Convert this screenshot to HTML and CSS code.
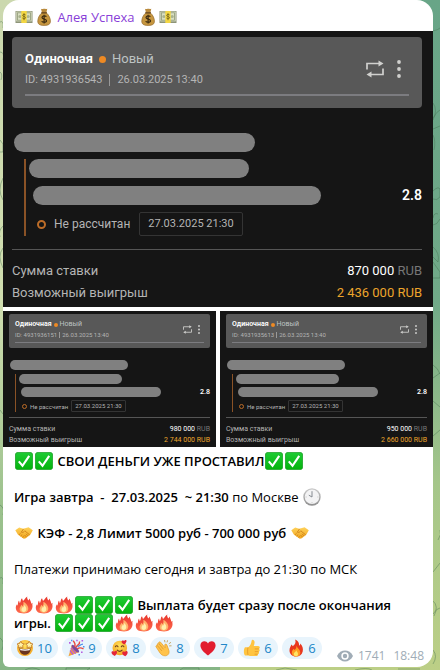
FILE: index.html
```html
<!DOCTYPE html>
<html lang="ru">
<head>
  <meta charset="UTF-8" />
  <meta name="viewport" content="width=device-width, initial-scale=1.0" />
  <title>Алея Успеха</title>
  <link rel="stylesheet" href="styles.css">
</head>

<body>
  <!-- icons -->
  <svg class="sprite" aria-hidden="true">
    <defs>
      <linearGradient id="g-check" x1="0" y1="0" x2="0" y2="1"><stop offset="0" stop-color="#1fcb35"/><stop offset="1" stop-color="#04b30c"/></linearGradient>
      <linearGradient id="g-fire" x1="0" y1="0" x2="0" y2="1"><stop offset="0" stop-color="#e8362c"/><stop offset="1" stop-color="#ff6a4c"/></linearGradient>
      <linearGradient id="g-hand" x1="0" y1="0" x2="0" y2="1"><stop offset="0" stop-color="#ffd25a"/><stop offset="1" stop-color="#f0a41c"/></linearGradient>
      <radialGradient id="g-face" cx=".5" cy=".35" r=".65"><stop offset="0" stop-color="#ffe25c"/><stop offset="1" stop-color="#f5a623"/></radialGradient>
      <linearGradient id="g-clock" x1="0" y1="0" x2="0" y2="1"><stop offset="0" stop-color="#c9c9c9"/><stop offset="1" stop-color="#8f8f8f"/></linearGradient>
    </defs>
    <symbol id="money" viewBox="0 0 18 18">
      <rect x=".5" y="3" width="17" height="12" fill="#8d9478"/>
      <rect x="1.3" y="3.6" width="15.4" height="9.8" fill="#d9dfc2"/>
      <rect x="2.5" y="4.8" width="13" height="7.4" fill="none" stroke="#909a78" stroke-width=".8"/>
      <circle cx="4.8" cy="8.5" r="1.5" fill="#a9b28e"/><circle cx="13.2" cy="8.5" r="1.5" fill="#a9b28e"/>
      <rect x="6.3" y="3" width="5.4" height="12" fill="#f4d743"/>
      <path d="M10.6 7c-.4-.7-3-.9-3 .4 0 1.4 3 .8 3 2.3 0 1.4-2.8 1.2-3.2.2M9 5.2v7" fill="none" stroke="#7c6a1a" stroke-width=".9"/>
    </symbol>
    <symbol id="bag" viewBox="0 0 18 18">
      <path d="M6 .8c1.4.8 2-.5 3.3 0 1.2-.5 2 .5 3 0L11.4 4.5H6.9z" fill="#b98a3d"/>
      <path d="M6.8 5h4.6c2.6 2 4 5.500 4 8.200 0 2.800-1.600 4.200-6.300 4.200s-6.300-1.400-6.300-4.200c0-2.700 1.400-6.200 4-8.200z" fill="#c6963f" stroke="#93682a" stroke-width=".7"/>
      <path d="M6.3 4.8h5.6" stroke="#6d4a1d" stroke-width="1.4"/>
      <path d="M11.3 8.8c-.5-1.200-4.300-1.300-4.300.7 0 2.200 4.500 1.100 4.500 3.300 0 2-4.200 1.800-4.800.3M9.1 6.8v8.6" fill="none" stroke="#3b2a10" stroke-width="1.2"/>
    </symbol>
    <symbol id="check" viewBox="0 0 18 18">
      <rect x=".4" y=".4" width="17.2" height="17.2" rx="2.5" fill="url(#g-check)" stroke="#189e22" stroke-width=".8"/>
      <path d="M3.8 9.4l3.7 4.4 6.7-10" fill="none" stroke="#fff" stroke-width="2.1"/>
    </symbol>
    <symbol id="handshake" viewBox="0 0 18 18">
      <path d="M.3 6.2L4.2 3.500 8.3 4.7 13.6 3.3 17.8 6.2 15.4 10.5 10.8 14.2 8.8 14.8 3 10.7z" fill="url(#g-hand)"/>
      <path d="M8.5 4.9L6.3 8.2c1.6.8 2.8-.4 3.5-1.400l5 4.200M4 10.8l1.6-1.5M5.6 12.1l1.6-1.5M7.4 13.4l1.4-1.4M11 9.8l2.3 2.3M9.5 11l2 2" fill="none" stroke="#c87a14" stroke-width=".8"/>
    </symbol>
    <symbol id="clock" viewBox="0 0 18 18">
      <circle cx="9" cy="9" r="8.7" fill="url(#g-clock)"/>
      <circle cx="9" cy="8.8" r="7.3" fill="#f3f3f4"/>
      <path d="M9 3.2V9L5.8 7.2" fill="none" stroke="#858a91" stroke-width="1"/>
      <path d="M9 15.2v-1M15.4 9h-1M2.6 9h1" stroke="#b8b8b8" stroke-width=".8"/>
    </symbol>
    <symbol id="blaze" viewBox="0 0 18 18">
      <path d="M2.600 16C.3 13.800.2 10.500 2 8.300l.3 1.500C3.400 8.300 2.600 6 4 4.600l.8 2.600C6 5.800 5.400 3.600 7 2.300l1 2.600C9.700 4 9.700 2.200 12.300.6c-.6 1.600.3 2.700 1 3.800l1.600-1.900c-.3 1.900 1.500 3.300 1.300 5.200l1.300-1c-.5 2 .5 3.200-.2 5.300C16.500 15 14.200 17.400 9 17.400c-2.700 0-4.900-.3-6.400-1.400z" fill="url(#g-fire)"/>
      <path d="M8.300 5.800c2.500 1.400 5.300 4.200 5 7.300-.3 2.400-2 3.700-4.400 3.700-2.500 0-4.400-1.600-4.300-4 .1-1.700 1.400-2.400 1.800-4l1.100 1.400c1-1.100 1.300-2.600.8-4.400z" fill="#ffb36b"/>
      <path d="M9 9c1.500 1.300 2.500 2.700 2.300 4.400-.2 1.600-1.200 2.500-2.500 2.500s-2.500-1-2.300-2.700c.2-1.200 1-1.600 1.300-2.500l.7.700c.4-.7.6-1.500.5-2.400z" fill="#fff0ac"/>
    </symbol>
    <symbol id="starstruck" viewBox="0 0 18 18">
      <circle cx="9" cy="9" r="8" fill="url(#g-face)"/>
      <path d="M3.400 9.200c3.300.9 7.900.9 11.200 0 .2 4-2.200 6.500-5.600 6.500s-5.800-2.500-5.600-6.500z" fill="#69331f"/>
      <path d="M4 9.800c3 .8 7 .8 10 0l-.4 1.500c-2.800.6-6.400.6-9.200 0z" fill="#fff"/>
      <path d="M4.800 2.300l1.100 2 2.400.5-1.600 1.800.2 2.400-2.100-1-2.300 1 .3-2.400L1 4.900l2.600-.5zM13.200 2.300l-1.100 2-2.400.5 1.600 1.800-.2 2.400 2.100-1 2.300 1-.3-2.400L17 4.900l-2.600-.5z" fill="#fff2a8" stroke="#b76a20" stroke-width=".7"/>
    </symbol>
    <symbol id="party" viewBox="0 0 18 18">
      <path d="M4.800 6.200l7 7.100L1.500 17.300z" fill="#f2a43a"/>
      <path d="M3.900 8.800l4.900 5.700M3 11.500l3.200 4" stroke="#b85bd4" stroke-width="1.3"/>
      <ellipse cx="8.3" cy="9.7" rx="1.7" ry="5" transform="rotate(-45 8.3 9.7)" fill="#7b4a9f"/>
      <path d="M7.500 7.800C8.800 5.700 8 4 6.200 1.800M10.200 10c2-1.800 4.300-1.200 6.300-.2M9 8.800c.3-3 4.400-2.600 3.500-6.300" fill="none" stroke="#e8483f" stroke-width="1.4"/>
      <path d="M10.500 7.500c2 .2 2.400-2.300 5.500-2.400" fill="none" stroke="#4d90ec" stroke-width="1.4"/>
      <path d="M2 3h1.700v1.700H2zM14.500 1h1.600v1.600h-1.600zM14 12.500h1.600v1.600H14zM9.200.8h1.500v1.500H9.200z" fill="#b65ce2"/>
      <path d="M4 .8h1.400v1.400H4zM16 7h1.500v1.500H16zM11.500 15h1.400v1.400h-1.400z" fill="#4d90ec"/>
    </symbol>
    <symbol id="loveface" viewBox="0 0 18 18">
      <circle cx="8.8" cy="9" r="7.3" fill="url(#g-face)"/>
      <path d="M4.400 7.700c.6-1.300 1.900-1.300 2.600 0M10.300 7.700c.6-1.300 1.900-1.300 2.600 0M6.300 11.200c1.400 1.500 3.500 1.500 4.800 0" fill="none" stroke="#71401b" stroke-width="1.1" stroke-linecap="round"/>
      <path d="M13.300 5.500c-4.400-2-2.700-5-.2-3.500 1.300-2.500 4.600-.6.200 3.500zM3.700 17C-1.500 14.300.6 11 3.300 12.800c1.600-2.700 5 0 .4 4.200zM14.300 17.300c-5-2.500-3-6-.4-4.200 1.500-2.700 5.200-.1.400 4.200z" fill="#e3263a"/>
    </symbol>
    <symbol id="clap" viewBox="0 0 18 18">
      <path d="M2.200 5c.8-.8 1.700-.3 2.300.4L3.600 3.700c.6-1.300 1.800-.9 2.400 0l4.200 5.100-.5-2.900c.5-1.400 2-.9 2.300.3l1.900 5.300c.8 3-1 5.200-3.600 5.300-2.600.2-4.700-1.600-6-3.900L1 7.800C.6 6.700 1.600 6.200 2.500 7z" fill="#ffc34b" stroke="#e39c2b" stroke-width=".7"/>
      <path d="M3 7.200l3.900 4.700M4.500 5.400l4 4.900" stroke="#d78e24" stroke-width=".7"/>
      <path d="M9.500 1l.5 2.300M12.600 1.300l-.6 2.100M16 3.300l-2.200 1.500M16.500 6.800l-2.300.1" stroke="#c8a765" stroke-width="1"/>
    </symbol>
    <symbol id="heart" viewBox="0 0 18 18">
      <path d="M9 16.600C5.500 13.600 1.500 10.500 1.400 6.500 1.300 1.700 7.200.6 9 4.500c1.800-3.900 7.700-2.800 7.600 2-.1 4-4.100 7.100-7.600 10.100z" fill="#e21d2f"/>
    </symbol>
    <symbol id="thumb" viewBox="0 0 18 18">
      <path d="M2 8.200h3.300c1.900-1.500 3-3.700 3.300-6.400C9 0 11.600.8 11.600 3.300c0 1.400-.4 2.600-.9 3.700h4.400c2 0 2.300 2.300.8 2.900 1.200.7 1 2.400-.3 2.800.8.900.4 2.200-.8 2.500.3 1.200-.4 1.800-1.600 1.800H7.800c-1.200 0-2-.6-3.200-.6H2c-1.500-1.700-1.500-6.200 0-8.200z" fill="#ffc440"/>
      <path d="M11.800 9.900h4M11.800 12.600h3.700M11.600 15.200h3.100M5 8.500c-.6 2.300-.5 5 0 7.500" fill="none" stroke="#e29726" stroke-width=".8"/>
    </symbol>
    <symbol id="flame" viewBox="0 0 18 18">
      <path d="M8.200.5c4 1.700 3.700 4 4 6.200.8-.4 1.100-1.200 1-2.200 2.300 2.200 3.200 5 2.500 8-.8 3.200-3.200 5-6.600 5-4 0-6.700-2.600-6.600-6.300 0-2.300 1.200-3.800 2-5.700.7.400 1 1 1.100 1.800C8 5.600 9.200 3.600 8.200.5z" fill="#e8371f"/>
      <path d="M9.500 6.500c.3 2.400 3.800 3.900 3.800 7 0 2.500-1.800 4-4.200 4-2.500 0-4.300-1.600-4.300-4 0-1.700 1-2.500 1.600-3.800l1 1.400c1.400-1 2.300-2.500 2.100-4.600z" fill="#ff9c22"/>
      <path d="M9.300 11.300c.4 1.300 1.700 2 1.700 3.700 0 1.400-.8 2.300-2 2.300s-2.200-.8-2.200-2.200c0-1.500 1.900-2 2.500-3.800z" fill="#ffe565"/>
    </symbol>
    <symbol id="eye" viewBox="0 0 16 12">
      <path d="M0 6C3.500-1.300 12.500-1.300 16 6 12.500 13.300 3.500 13.300 0 6z" fill="currentColor"/>
      <circle cx="8" cy="6" r="3.700" fill="#fff"/><circle cx="8" cy="6" r="2.200" fill="currentColor"/>
    </symbol>
    <symbol id="repeat" viewBox="0 0 18 18">
      <path d="M1 9.500V3.500h12.500M17 8.500v6H4.500" fill="none" stroke="currentColor" stroke-width="1.7"/>
      <path d="M12.500.5L17.500 3.500l-5 3zM5.500 11.500L.5 14.500l5 3z" fill="currentColor"/>
    </symbol>
    <symbol id="dots" viewBox="0 0 4 18">
      <circle cx="2" cy="2" r="1.9" fill="currentColor"/><circle cx="2" cy="9" r="1.9" fill="currentColor"/><circle cx="2" cy="16" r="1.9" fill="currentColor"/>
    </symbol>
  </svg>

  <!-- chat wallpaper -->
  <svg class="wallpaper" viewBox="0 0 440 670" preserveAspectRatio="none" aria-hidden="true">
    <path d="M0 22q4-2 3 6M0 52q5 0 3 8M0 72q3 2 1 8M0 140l3 4v8H0M3 178q-6 12 0 22M3 226q-5 5-3 11M3 248q-6 8 0 20M0 410l3 4M0 505q5 3 3 10M0 578q4-2 3 6M0 638q5 3 2 12"/>
    <path d="M433 31q5-1 7-3M433 103q5 7 0 17M433 118q4-7 7-8M433 129l7-3M433 135q3 6 1 15M433 191q5-5 7-2v8q-3 4-7 2M433 218q1-6 5-4M433 225q4 0 7-6M433 247q7 6 5 15l-5-5M433 262l7 10v6h-7M433 365q5 3 7 9M433 378l7-5M433 401l7 6M433 436l7-6M438 540q4-6 2-10M433 572l7-9M433 601q6 5 1 15M433 614q4-6 7-6"/>
    <path d="M25 670q7-4 15 0M66 670v-2h24l-3 2M180 670l3-2h16v2M276 670l9-2 12 2M355 670q12-3 17 0M398 669h22M433 650q5 6 0 14"/>
  </svg>

  <article class="message">
    <h1 class="author">
      <svg class="emoji"><use href="#money"/></svg><svg class="emoji"><use href="#bag"/></svg>
      <a href="#">Алея Успеха</a>
      <svg class="emoji"><use href="#bag"/></svg><svg class="emoji"><use href="#money"/></svg>
    </h1>

    <div class="album">
      <section class="ticket">
        <header class="ticket-head">
          <div class="ticket-top">
            <div class="ticket-info">
              <div class="ticket-title"><b>Одиночная</b><i class="dot"></i><span>Новый</span></div>
              <div class="ticket-id"><span>ID: 4931936543</span><span class="ticket-date">26.03.2025 13:40</span></div>
            </div>
            <button class="icon-btn" aria-label="Повторить"><svg class="icon-repeat"><use href="#repeat"/></svg></button>
            <button class="icon-btn" aria-label="Ещё"><svg class="icon-dots"><use href="#dots"/></svg></button>
          </div>
        </header>
        <div class="ticket-body">
          <div class="bar bar-event"></div>
          <div class="outcome">
            <div class="bar bar-teams"></div>
            <div class="outcome-row"><div class="bar bar-pick"></div><b class="odds">2.8</b></div>
            <div class="status"><i class="ring"></i><span>Не рассчитан</span><time class="when">27.03.2025 21:30</time></div>
          </div>
        </div>
        <dl class="totals">
          <div><dt>Сумма ставки</dt><dd>870 000 <span>RUB</span></dd></div>
          <div class="win"><dt>Возможный выигрыш</dt><dd>2 436 000 RUB</dd></div>
        </dl>
      </section>

      <section class="ticket small">
        <header class="ticket-head">
          <div class="ticket-top">
            <div class="ticket-info">
              <div class="ticket-title"><b>Одиночная</b><i class="dot"></i><span>Новый</span></div>
              <div class="ticket-id"><span>ID: 4931936151</span><span class="ticket-date">26.03.2025 13:40</span></div>
            </div>
            <button class="icon-btn" aria-label="Повторить"><svg class="icon-repeat"><use href="#repeat"/></svg></button>
            <button class="icon-btn" aria-label="Ещё"><svg class="icon-dots"><use href="#dots"/></svg></button>
          </div>
        </header>
        <div class="ticket-body">
          <div class="bar bar-event"></div>
          <div class="outcome">
            <div class="bar bar-teams"></div>
            <div class="outcome-row"><div class="bar bar-pick"></div><b class="odds">2.8</b></div>
            <div class="status"><i class="ring"></i><span>Не рассчитан</span><time class="when">27.03.2025 21:30</time></div>
          </div>
        </div>
        <dl class="totals">
          <div><dt>Сумма ставки</dt><dd>980 000 <span>RUB</span></dd></div>
          <div class="win"><dt>Возможный выигрыш</dt><dd>2 744 000 RUB</dd></div>
        </dl>
      </section>

      <section class="ticket small">
        <header class="ticket-head">
          <div class="ticket-top">
            <div class="ticket-info">
              <div class="ticket-title"><b>Одиночная</b><i class="dot"></i><span>Новый</span></div>
              <div class="ticket-id"><span>ID: 4931935613</span><span class="ticket-date">26.03.2025 13:40</span></div>
            </div>
            <button class="icon-btn" aria-label="Повторить"><svg class="icon-repeat"><use href="#repeat"/></svg></button>
            <button class="icon-btn" aria-label="Ещё"><svg class="icon-dots"><use href="#dots"/></svg></button>
          </div>
        </header>
        <div class="ticket-body">
          <div class="bar bar-event"></div>
          <div class="outcome">
            <div class="bar bar-teams"></div>
            <div class="outcome-row"><div class="bar bar-pick"></div><b class="odds">2.8</b></div>
            <div class="status"><i class="ring"></i><span>Не рассчитан</span><time class="when">27.03.2025 21:30</time></div>
          </div>
        </div>
        <dl class="totals">
          <div><dt>Сумма ставки</dt><dd>950 000 <span>RUB</span></dd></div>
          <div class="win"><dt>Возможный выигрыш</dt><dd>2 660 000 RUB</dd></div>
        </dl>
      </section>
    </div>

    <div class="text">
      <p><svg class="emoji"><use href="#check"/></svg><svg class="emoji"><use href="#check"/></svg> <b>СВОИ ДЕНЬГИ УЖЕ ПРОСТАВИЛ</b><svg class="emoji"><use href="#check"/></svg><svg class="emoji"><use href="#check"/></svg></p>
      <p><b>Игра завтра &nbsp;- &nbsp;27.03.2025 &nbsp;~ 21:30</b> по Москве <svg class="emoji"><use href="#clock"/></svg></p>
      <p><svg class="emoji"><use href="#handshake"/></svg> <b>КЭФ - 2,8 Лимит 5000 руб - 700 000 руб</b> <svg class="emoji"><use href="#handshake"/></svg></p>
      <p>Платежи принимаю сегодня и завтра до 21:30 по МСК</p>
      <p><svg class="emoji"><use href="#blaze"/></svg><svg class="emoji"><use href="#blaze"/></svg><svg class="emoji"><use href="#blaze"/></svg><svg class="emoji"><use href="#check"/></svg><svg class="emoji"><use href="#check"/></svg><svg class="emoji"><use href="#check"/></svg> <b>Выплата будет сразу после окончания игры.</b> <svg class="emoji"><use href="#check"/></svg><svg class="emoji"><use href="#check"/></svg><svg class="emoji"><use href="#check"/></svg><svg class="emoji"><use href="#blaze"/></svg><svg class="emoji"><use href="#blaze"/></svg><svg class="emoji"><use href="#blaze"/></svg></p>
    </div>

    <footer class="message-foot">
      <div class="reactions">
        <button><svg><use href="#starstruck"/></svg>10</button>
        <button><svg><use href="#party"/></svg>9</button>
        <button><svg><use href="#loveface"/></svg>8</button>
        <button><svg><use href="#clap"/></svg>8</button>
        <button><svg><use href="#heart"/></svg>7</button>
        <button><svg><use href="#thumb"/></svg>6</button>
        <button><svg><use href="#flame"/></svg>6</button>
      </div>
      <div class="meta"><svg><use href="#eye"/></svg><span>1741</span><time>18:48</time></div>
    </footer>
  </article>
</body>
</html>
```
FILE: styles.css
```css
* {
  box-sizing: border-box;
}
body {
  margin: 0;
  padding: 0 7px 3px 3px;
  font-family: "Open Sans", sans-serif;
  font-size: 13px;
  line-height: 18px;
  color: #000;
  background:
    linear-gradient(#68a587, #70a988 45%, #a5c68a 72%, #bccf86) right / 50% 100% no-repeat,
    linear-gradient(#cbd8ae, #d0deb0 45%, #9cc28d 75%, #86b585);
}
.sprite {
  position: absolute;
  width: 0;
  height: 0;
}
.wallpaper {
  position: absolute;
  top: 0;
  left: 0;
  width: 100%;
  height: 100%;
  fill: none;
  stroke: #3f6b4a;
  stroke-opacity: 0.4;
  z-index: -1;
}
.message {
  background: #fff;
  border-radius: 16px 16px 16px 6px;
  padding-bottom: 3px;
}
.emoji {
  width: 18px;
  height: 18px;
  margin: 0 1px;
  vertical-align: -4px;
}
b {
  font-weight: 600;
}
.author {
  margin: 0;
  padding: 8px 11px 5px;
  font-size: 13px;
  font-weight: 500;
}
.author a {
  color: #8a3fd8;
  text-decoration: none;
}

/* album */
.album {
  display: grid;
  grid-template-columns: 1fr 1fr;
  gap: 4px;
}
.ticket {
  grid-column: span 2;
  background: #151515;
  color: #b4b4b4;
  padding: 6px 11px 3px 9px;
  font-family: Roboto, sans-serif;
  font-size: 13px;
  line-height: 22px;
}
.ticket-head {
  background: #585858;
  border-radius: 4px;
  padding: 11px 13px 12px;
}
.ticket-top {
  display: flex;
  align-items: center;
  border-bottom: 2px solid #7c7c80;
  padding-bottom: 4px;
}
.ticket-info {
  flex: 1;
}
.ticket-title {
  display: flex;
  align-items: center;
  color: #bdc3c3;
}
.ticket-title b {
  color: #fff;
}
.dot {
  width: 7px;
  height: 7px;
  margin: 0 6px;
  border-radius: 50%;
  background: #ee8a24;
}
.ticket-id {
  display: flex;
  align-items: center;
  font-size: 11px;
  line-height: 20px;
}
.ticket-date {
  margin-left: 7px;
  padding-left: 7px;
  border-left: 1px solid #999;
  line-height: 12px;
}
.icon-btn {
  display: flex;
  padding: 0;
  border: none;
  background: none;
  color: #d0d0ce;
  cursor: pointer;
}
.icon-repeat {
  width: 18px;
  height: 18px;
}
.icon-dots {
  width: 4px;
  height: 18px;
  margin: 0 8px 0 13px;
}
.ticket-body {
  padding: 25px 0 13px 2px;
}
.bar {
  height: 19px;
  border-radius: 10px;
  background: #808080;
}
.bar-event {
  width: 59%;
}
.outcome {
  margin: 7px 0 0 10px;
  padding-left: 3px;
  border-left: 2px solid #8a5226;
}
.bar-teams {
  width: 56%;
}
.outcome-row {
  display: flex;
  align-items: center;
  justify-content: space-between;
  margin: 8px 0 7px 4px;
}
.bar-pick {
  width: 74%;
}
.odds {
  color: #fff;
  font-size: 14px;
  line-height: 19px;
}
.status {
  display: flex;
  align-items: center;
  padding-left: 8px;
  font-size: 12px;
}
.ring {
  width: 9px;
  height: 9px;
  margin-right: 8px;
  border: 2px solid #bc6c28;
  border-radius: 50%;
}
.when {
  margin-left: 9px;
  padding: 0 8px;
  border: 1px solid #343434;
  border-radius: 2px;
  font-size: 11px;
}
.totals {
  margin: 0;
  padding-top: 10px;
  border-top: 1px solid #555;
}
.totals div {
  display: flex;
  justify-content: space-between;
}
.totals dd {
  margin: 0;
  color: #fff;
}
.totals span {
  color: #777;
}
.totals .win dd {
  color: #eda52c;
}

/* the two thumbnails under the main ticket */
.small {
  grid-column: span 1;
  padding: 3px 6px 1px;
  font-size: 7px;
  line-height: 11px;
}
.small .ticket-head {
  border-radius: 2px;
  padding: 5px 6px;
}
.small .ticket-top {
  border-bottom-width: 1px;
  padding-bottom: 2px;
}
.small .dot {
  width: 4px;
  height: 4px;
  margin: 0 2px;
}
.small .ticket-id {
  font-size: 6px;
  line-height: 10px;
}
.small .ticket-date {
  margin-left: 2px;
  padding-left: 2px;
  line-height: 6px;
}
.small .icon-repeat {
  width: 9px;
  height: 9px;
}
.small .icon-dots {
  width: 2px;
  height: 9px;
  margin: 0 4px 0 6px;
}
.small .ticket-body {
  padding: 12px 0 5px 1px;
}
.small .bar {
  height: 10px;
}
.small .outcome {
  margin: 4px 0 0 5px;
  padding-left: 3px;
  border-left-width: 1px;
}
.small .bar-teams {
  width: 54%;
}
.small .outcome-row {
  margin: 3px 0 3px 2px;
}
.small .odds {
  font-size: 7px;
  line-height: 10px;
}
.small .status {
  padding-left: 3px;
  font-size: 6px;
}
.small .ring {
  width: 5px;
  height: 5px;
  margin-right: 3px;
  border-width: 1px;
}
.small .when {
  margin-left: 3px;
  padding: 0 3px;
  border-radius: 1px;
  font-size: 6px;
  line-height: 10px;
}
.small .totals {
  padding-top: 6px;
}

/* text */
.text {
  padding: 5px 11px 0;
}
.text p {
  margin: 0 0 18px;
}
.text p:last-child {
  margin-bottom: 0;
}
.message-foot {
  display: flex;
  align-items: flex-end;
  justify-content: space-between;
  padding: 5px 9px 0 8px;
}
.reactions {
  display: flex;
  gap: 4px;
  margin-bottom: 5px;
}
.reactions button {
  display: flex;
  align-items: center;
  justify-content: center;
  gap: 3px;
  min-width: 40px;
  height: 22px;
  padding: 0 6px 0 5px;
  border: none;
  border-radius: 11px;
  background: #e8f4fc;
  color: #2186c8;
  font: 500 13px "Open Sans", sans-serif;
  cursor: pointer;
}
.reactions svg {
  width: 18px;
  height: 18px;
}
.meta {
  display: flex;
  align-items: center;
  color: #a0acb6;
  font-size: 12px;
  line-height: 16px;
}
.meta svg {
  width: 16px;
  height: 12px;
  margin-right: 5px;
}
.meta time {
  margin-left: 8px;
}
```
